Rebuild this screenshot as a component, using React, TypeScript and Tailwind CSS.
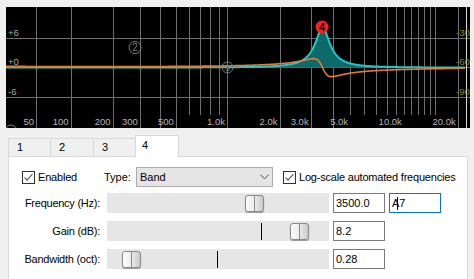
import React from "react";

const FS = 44100;
const fx = (f: number) => 227 + 78 * Math.log((f + 40) / 1040);
const fy = (db: number) => 67.5 - db * 4.9;

// peaking band, RBJ style
function band(f: number, f0: number, gain: number, bw: number) {
  const A = Math.pow(10, gain / 40);
  const w0 = (2 * Math.PI * f0) / FS;
  const alpha = Math.sin(w0) * Math.sinh(((Math.LN2 / 2) * bw * w0) / Math.sin(w0));
  const c = Math.cos(w0);
  const b = [1 + alpha * A, -2 * c, 1 - alpha * A];
  const a = [1 + alpha / A, -2 * c, 1 - alpha / A];
  const w = (2 * Math.PI * f) / FS;
  const nr = b[0] + b[1] * Math.cos(w) + b[2] * Math.cos(2 * w);
  const ni = -(b[1] * Math.sin(w) + b[2] * Math.sin(2 * w));
  const dr = a[0] + a[1] * Math.cos(w) + a[2] * Math.cos(2 * w);
  const di = -(a[1] * Math.sin(w) + a[2] * Math.sin(2 * w));
  const mag = Math.sqrt(nr * nr + ni * ni) / Math.sqrt(dr * dr + di * di);
  return { db: 20 * Math.log10(mag), ph: Math.atan2(ni, nr) - Math.atan2(di, dr) };
}

const pts: { x: number; db: number; ph: number }[] = [];
for (let x = 6; x <= 465; x += 0.5) {
  const f = Math.max(5, 1040 * Math.exp((x - 227) / 78) - 40);
  const r = band(f, 3500, 8.2, 0.34);
  pts.push({ x, db: r.db, ph: r.ph });
}
const maxPh = Math.max(...pts.map((p) => Math.abs(p.ph)));
const magLine = pts.map((p) => `${p.x},${fy(p.db).toFixed(2)}`).join(" ");
const fillPoly = `6,67.5 ${magLine} 465,67.5`;
const phLine = pts
  .map((p) => {
    const base = 66.4 + ((p.x - 6) / 460) * 1.8;
    return `${p.x},${(base - (p.ph / maxPh) * 9).toFixed(2)}`;
  })
  .join(" ");

const fullLines = [50, 100, 200, 300, 400, 500, 1000, 2000, 3000, 4000, 20000];
const shortLines = [600, 700, 800, 900, 5000, 6000, 7000, 8000, 9000, 10000, 11000, 12000, 13000, 14000, 15000];
const freqLabels: [number, string][] = [
  [50, "50"],
  [100, "100"],
  [200, "200"],
  [300, "300"],
  [500, "500"],
  [1000, "1.0k"],
  [2000, "2.0k"],
  [3000, "3.0k"],
  [5000, "5.0k"],
  [10000, "10.0k"],
  [20000, "20.0k"],
];
const px = (v: number) => Math.round(v) + 0.5;

function Graph() {
  return (
    <svg width={464} height={121} viewBox="6 7 464 121" className="block">
      <rect x={6} y={7} width={464} height={121} fill="#000" />
      {[38, 67, 97].map((y) => (
        <line key={y} x1={6} x2={470} y1={y + 0.5} y2={y + 0.5} stroke="#6e6e6e" />
      ))}
      {fullLines.map((f) => (
        <line key={f} x1={px(fx(f))} x2={px(fx(f))} y1={7} y2={128} stroke="#6e6e6e" />
      ))}
      {shortLines.map((f) => (
        <line key={f} x1={px(fx(f))} x2={px(fx(f))} y1={7} y2={115} stroke="#6e6e6e" />
      ))}
      <line x1={466.5} x2={466.5} y1={7} y2={128} stroke="#d8d8d8" />
      <g fontFamily="'Liberation Sans', sans-serif" fontSize={9.5}>
        {freqLabels.map(([f, t]) => (
          <text key={t} x={fx(f) - 2} y={125} textAnchor="end" fill="#b4b4b4">
            {t}
          </text>
        ))}
        <text x={8} y={35.5} fill="#a8a8a8">+6</text>
        <text x={8} y={65} fill="#a8a8a8">+0</text>
        <text x={8} y={95} fill="#a8a8a8">-6</text>
        <text x={456} y={35.5} fill="#8a8a26">-30</text>
        <text x={456} y={65} fill="#8a8a26">-60</text>
        <text x={456} y={95} fill="#8a8a26">-90</text>
      </g>
      <polygon points={fillPoly} fill="#0e6a6a" />
      <polyline points={magLine} fill="none" stroke="#22c8c8" strokeWidth={2} />
      <polyline points={phLine} fill="none" stroke="#e57a38" strokeWidth={1.6} />
      <g fontFamily="'Liberation Sans', sans-serif" fontSize={10} textAnchor="middle">
        <circle cx={11} cy={131} r={6} fill="none" stroke="#7a7a7a" />
        <circle cx={135} cy={47.5} r={6} fill="none" stroke="#7a7a7a" />
        <text x={135} y={51.2} fill="#7a7a7a">2</text>
        <circle cx={227.5} cy={67.5} r={5.5} fill="none" stroke="#7a7a7a" />
        <line x1={227.5} x2={227.5} y1={62} y2={73} stroke="#7a7a7a" />
        <text x={227.5} y={71} fill="#7a7a7a" fontSize={9}>3</text>
        <circle cx={322} cy={27} r={6.5} fill="#ff1c1c" />
        <text x={322} y={30.8} fill="#000" fontWeight="bold">4</text>
      </g>
    </svg>
  );
}

function Check({ label, className }: { label: string; className?: string }) {
  return (
    <div className={`flex items-center ${className ?? ""}`}>
      <div className="w-[13px] h-[13px] border border-[#333] bg-white flex items-center justify-center">
        <svg width="11" height="11" viewBox="0 0 11 11">
          <polyline points="1.5,5.5 4,8.2 9.5,2" fill="none" stroke="#4a4a4a" strokeWidth="1.1" />
        </svg>
      </div>
      <span className="ml-[3px] tracking-[-0.2px]">{label}</span>
    </div>
  );
}

function Slider({ thumb, tick }: { thumb: number; tick: number }) {
  return (
    <div className="relative w-[222px] h-[20px] bg-[#e6e6e6]">
      <div className="absolute top-[2px] w-px h-[17px] bg-black" style={{ left: tick }} />
      <div
        className="absolute top-[2px] w-[19px] h-[17px] rounded-[3px] border border-[#8a8a8a] bg-gradient-to-r from-[#fbfbfb] via-[#ececec] to-[#c9c9c9] shadow-[0_1px_1px_rgba(0,0,0,0.35)] flex justify-center"
        style={{ left: thumb }}
      >
        <div className="w-px h-full bg-[#8a8a8a]" />
      </div>
    </div>
  );
}

function Row({ label, thumb, tick, value, extra }: { label: string; thumb: number; tick: number; value: string; extra?: React.ReactNode }) {
  return (
    <div className="flex items-center h-[20px]">
      <div className="w-[91px] text-right tracking-[-0.25px]">{label}</div>
      <div className="ml-[7px]">
        <Slider thumb={thumb} tick={tick} />
      </div>
      <div className="ml-[4px] w-[52px] h-[20px] border border-[#7a7a7a] bg-white pl-[2px] leading-[18px]">{value}</div>
      {extra}
    </div>
  );
}

export default function App() {
  return (
    <div className="w-[474px] h-[279px] overflow-hidden bg-[#f0f0f0] text-[11px] text-black font-['Liberation_Sans',sans-serif]">
      <div className="pt-[7px] pl-[6px]">
        <Graph />
      </div>
      <div className="flex items-end h-[28px] pl-[8px]">
        <div className="w-[42px] h-[18px] border-l border-t border-[#d9d9d9] pl-[8px] leading-[17px]">1</div>
        <div className="w-[43px] h-[18px] border-l border-t border-[#d9d9d9] pl-[8px] leading-[17px]">2</div>
        <div className="w-[42px] h-[18px] border-l border-t border-[#d9d9d9] pl-[8px] leading-[17px]">3</div>
        <div className="relative z-10 -mb-px w-[44px] h-[22px] border border-b-0 border-[#d9d9d9] bg-white pl-[6px] leading-[18px]">4</div>
      </div>
      <div className="ml-[8px] w-[460px] h-[130px] bg-white border border-[#d9d9d9] pt-[10px]">
        <div className="flex items-center h-[20px] pl-[13px]">
          <Check label="Enabled" className="w-[82px]" />
          <span className="w-[32px]">Type:</span>
          <div className="w-[137px] h-[20px] border border-[#adadad] bg-[#e5e5e5] flex items-center justify-between pl-[3px] pr-[3px]">
            <span>Band</span>
            <svg width="9" height="6" viewBox="0 0 9 6">
              <polyline points="0.5,0.8 4.5,4.8 8.5,0.8" fill="none" stroke="#444" strokeWidth="1" />
            </svg>
          </div>
          <Check label="Log-scale automated frequencies" className="ml-[10px]" />
        </div>
        <div className="mt-[6px] flex flex-col gap-[8px]">
          <Row
            label="Frequency (Hz):"
            thumb={138}
            tick={154}
            value="3500.0"
            extra={
              <div className="ml-[4px] w-[52px] h-[20px] border border-[#0078d7] bg-white pl-[2px] leading-[18px] flex items-center">
                <span>A</span>
                <span className="w-px h-[13px] bg-black -ml-[2px] mr-[1px]" />
                <span>7</span>
              </div>
            }
          />
          <Row label="Gain (dB):" thumb={183} tick={154} value="8.2" />
          <Row label="Bandwidth (oct):" thumb={15} tick={110} value="0.28" />
        </div>
      </div>
    </div>
  );
}
